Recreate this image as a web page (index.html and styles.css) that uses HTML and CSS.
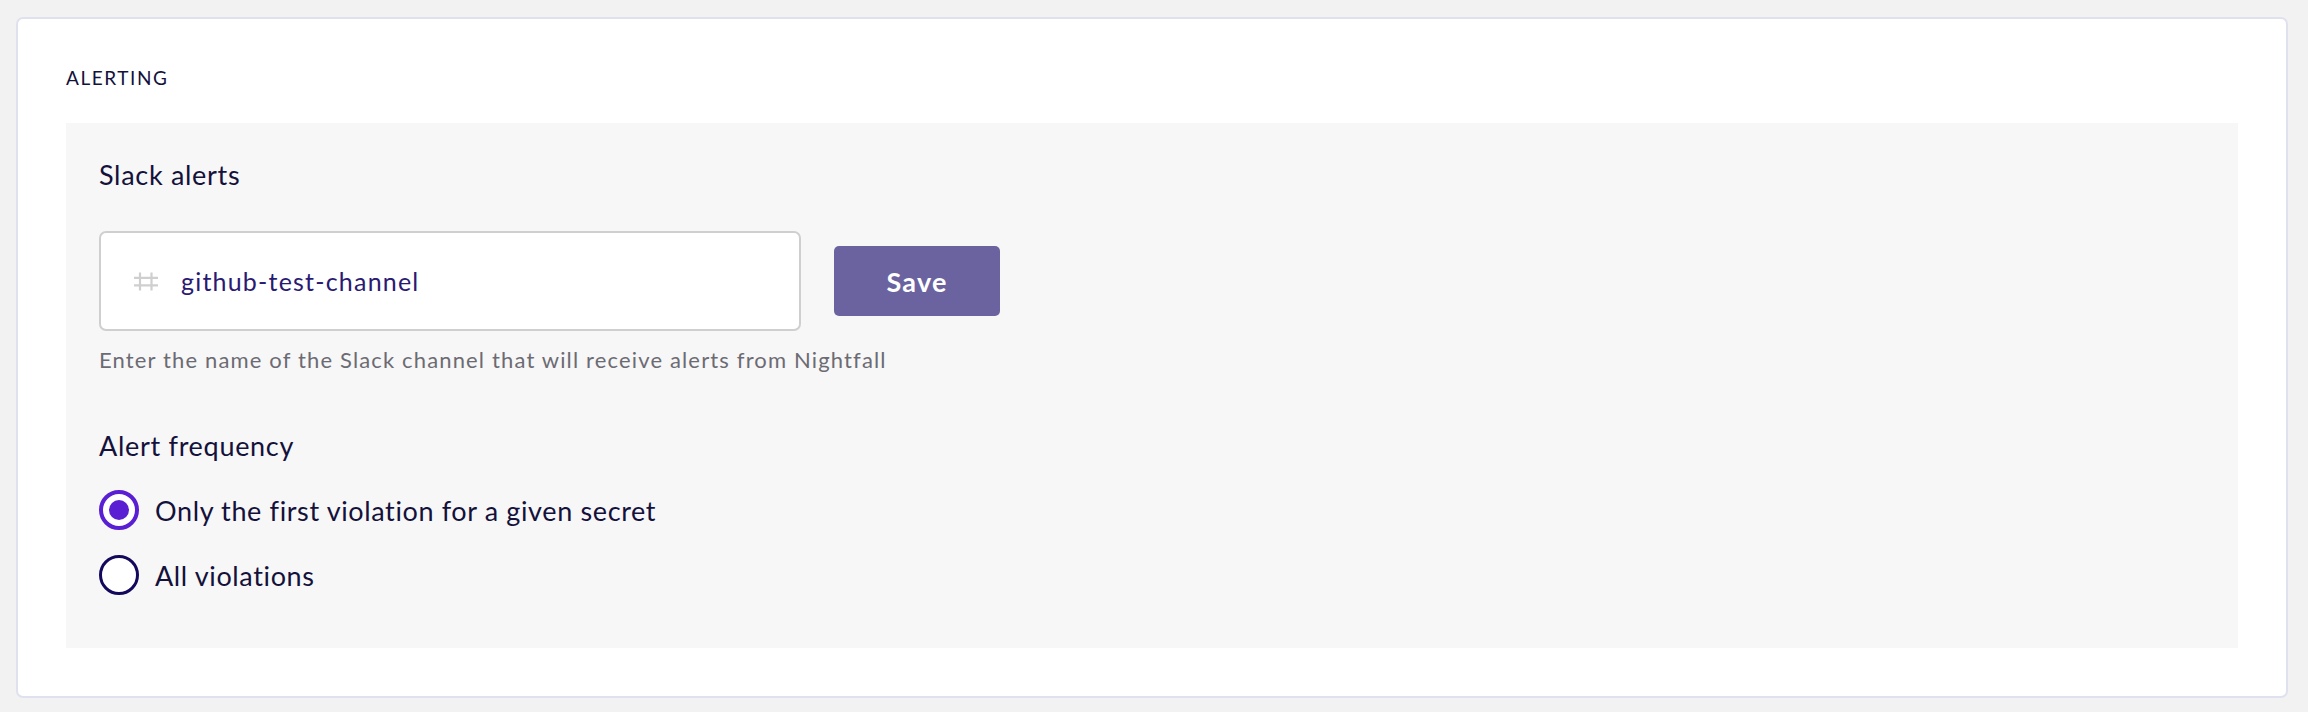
FILE: index.html
```html
<!DOCTYPE html>
<html lang="en">
<head>
<meta charset="utf-8">
<title>Alerting</title>
<link rel="stylesheet" href="styles.css">
</head>
<body>
<div class="page">
  <section class="card">
    <h2 class="section-title">ALERTING</h2>
    <div class="panel">
      <h3 class="field-label">Slack alerts</h3>
      <div class="input-row">
        <div class="channel-input">
          <svg class="hash" width="24" height="19" viewBox="0 0 24 19" aria-hidden="true">
            <path d="M6 0.5 V18.5 M17.5 0.5 V18.5 M0 5.8 H24 M0 13.3 H24" stroke="#cfcfcf" stroke-width="2.2" fill="none"/>
          </svg>
          <span class="channel-value">github-test-channel</span>
        </div>
        <button class="btn-save" type="button">Save</button>
      </div>
      <p class="helper">Enter the name of the Slack channel that will receive alerts from Nightfall</p>
      <h3 class="field-label freq-label">Alert frequency</h3>
      <div class="radio-group">
        <label class="radio-row">
          <span class="radio radio-checked"><span class="radio-dot"></span></span>
          <span class="radio-text">Only the first violation for a given secret</span>
        </label>
        <label class="radio-row">
          <span class="radio"></span>
          <span class="radio-text">All violations</span>
        </label>
      </div>
    </div>
  </section>
</div>
</body>
</html>
```
FILE: styles.css
```css
* { box-sizing: border-box; }
html, body {
  margin: 0;
  padding: 0;
  background: #f2f2f3;
  font-family: "Lato", "Liberation Sans", sans-serif;
  color: #14113b;
}
.page {
  padding: 17px 20px 13px 16px;
}
.card {
  background: #ffffff;
  border: 2px solid #e0e1ee;
  border-radius: 7px;
  padding: 47px 48px 48px 48px;
}
.section-title {
  margin: 0 0 33px 0;
  font-size: 19px;
  line-height: 24px;
  font-weight: 400;
  letter-spacing: 1.55px;
  color: #14113b;
}
.panel {
  background: #f7f7f7;
  padding: 36px 33px 53px 33px;
}
.field-label {
  margin: 0;
  font-size: 27px;
  line-height: 32px;
  font-weight: 400;
  letter-spacing: 0.7px;
  color: #14113b;
}
.input-row {
  margin-top: 40px;
  display: flex;
  align-items: center;
  gap: 33px;
}
.channel-input {
  width: 702px;
  height: 100px;
  background: #ffffff;
  border: 2px solid #cfcfcf;
  border-radius: 7px;
  display: flex;
  align-items: center;
  gap: 23px;
  padding-left: 33px;
}
.hash {
  display: block;
  flex: none;
}
.channel-value {
  font-size: 25px;
  letter-spacing: 1.2px;
  color: #2a1a72;
}
.btn-save {
  width: 166px;
  height: 70px;
  background: #6b63a0;
  border: none;
  border-radius: 5px;
  color: #ffffff;
  font-family: inherit;
  font-size: 27px;
  font-weight: 700;
  letter-spacing: 1.2px;
  padding: 0;
}
.helper {
  margin: 17px 0 0 0;
  font-size: 22px;
  line-height: 24px;
  letter-spacing: 1.15px;
  color: #6c6b73;
}
.freq-label {
  margin-top: 58px;
}
.radio-group {
  margin-top: 28px;
  display: flex;
  flex-direction: column;
  gap: 25px;
}
.radio-row {
  display: flex;
  align-items: center;
  gap: 16px;
  height: 40px;
}
.radio {
  width: 40px;
  height: 40px;
  border-radius: 50%;
  border: 3.5px solid #13095c;
  background: #ffffff;
  display: flex;
  align-items: center;
  justify-content: center;
  flex: none;
}
.radio-checked {
  border: 4.5px solid #5a1fd3;
}
.radio-dot {
  width: 20px;
  height: 20px;
  border-radius: 50%;
  background: #5a1fd3;
}
.radio-text {
  font-size: 27px;
  letter-spacing: 0.63px;
  color: #14113b;
}
```
